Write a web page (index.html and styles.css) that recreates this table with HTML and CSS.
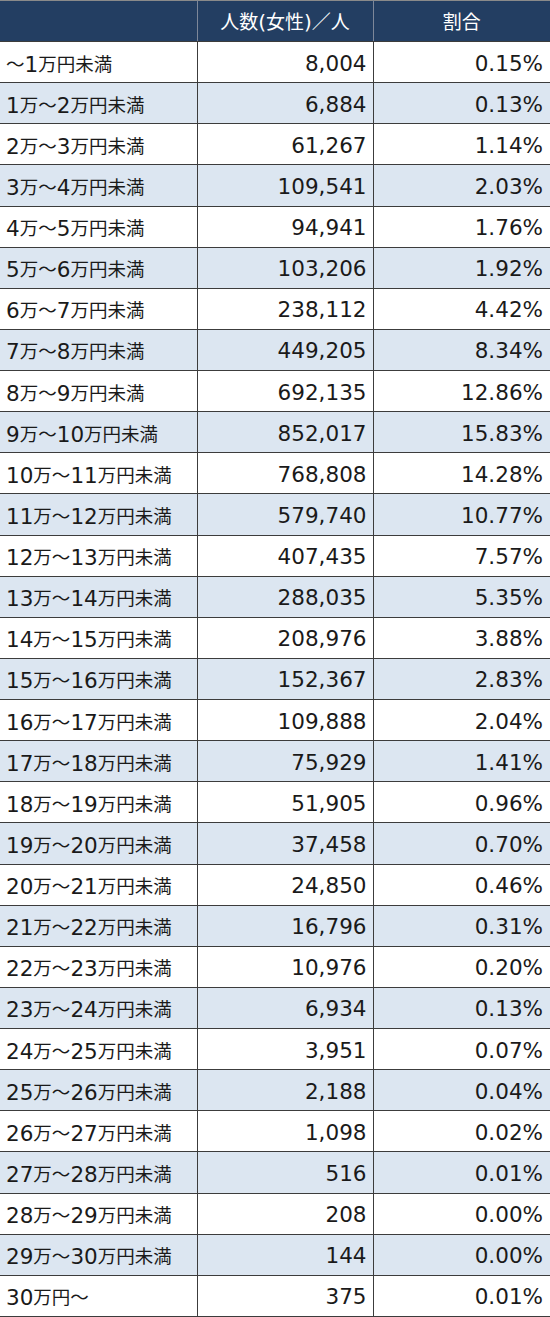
FILE: index.html
```html
<!DOCTYPE html>
<html lang="ja">
<head>
<meta charset="utf-8">
<link rel="stylesheet" href="styles.css">
</head>
<body>
<table class="dist">
<colgroup><col class="c1"><col class="c2"><col class="c3"></colgroup>
<thead>
<tr><th></th><th>人数<span class="p">(</span>女性<span class="p">)</span>／人</th><th>割合</th></tr>
</thead>
<tbody>
<tr><td>～<span class="n">1</span>万円未満</td><td>8,004</td><td>0.15%</td></tr>
<tr><td><span class="n">1</span>万～<span class="n">2</span>万円未満</td><td>6,884</td><td>0.13%</td></tr>
<tr><td><span class="n">2</span>万～<span class="n">3</span>万円未満</td><td>61,267</td><td>1.14%</td></tr>
<tr><td><span class="n">3</span>万～<span class="n">4</span>万円未満</td><td>109,541</td><td>2.03%</td></tr>
<tr><td><span class="n">4</span>万～<span class="n">5</span>万円未満</td><td>94,941</td><td>1.76%</td></tr>
<tr><td><span class="n">5</span>万～<span class="n">6</span>万円未満</td><td>103,206</td><td>1.92%</td></tr>
<tr><td><span class="n">6</span>万～<span class="n">7</span>万円未満</td><td>238,112</td><td>4.42%</td></tr>
<tr><td><span class="n">7</span>万～<span class="n">8</span>万円未満</td><td>449,205</td><td>8.34%</td></tr>
<tr><td><span class="n">8</span>万～<span class="n">9</span>万円未満</td><td>692,135</td><td>12.86%</td></tr>
<tr><td><span class="n">9</span>万～<span class="n">10</span>万円未満</td><td>852,017</td><td>15.83%</td></tr>
<tr><td><span class="n">10</span>万～<span class="n">11</span>万円未満</td><td>768,808</td><td>14.28%</td></tr>
<tr><td><span class="n">11</span>万～<span class="n">12</span>万円未満</td><td>579,740</td><td>10.77%</td></tr>
<tr><td><span class="n">12</span>万～<span class="n">13</span>万円未満</td><td>407,435</td><td>7.57%</td></tr>
<tr><td><span class="n">13</span>万～<span class="n">14</span>万円未満</td><td>288,035</td><td>5.35%</td></tr>
<tr><td><span class="n">14</span>万～<span class="n">15</span>万円未満</td><td>208,976</td><td>3.88%</td></tr>
<tr><td><span class="n">15</span>万～<span class="n">16</span>万円未満</td><td>152,367</td><td>2.83%</td></tr>
<tr><td><span class="n">16</span>万～<span class="n">17</span>万円未満</td><td>109,888</td><td>2.04%</td></tr>
<tr><td><span class="n">17</span>万～<span class="n">18</span>万円未満</td><td>75,929</td><td>1.41%</td></tr>
<tr><td><span class="n">18</span>万～<span class="n">19</span>万円未満</td><td>51,905</td><td>0.96%</td></tr>
<tr><td><span class="n">19</span>万～<span class="n">20</span>万円未満</td><td>37,458</td><td>0.70%</td></tr>
<tr><td><span class="n">20</span>万～<span class="n">21</span>万円未満</td><td>24,850</td><td>0.46%</td></tr>
<tr><td><span class="n">21</span>万～<span class="n">22</span>万円未満</td><td>16,796</td><td>0.31%</td></tr>
<tr><td><span class="n">22</span>万～<span class="n">23</span>万円未満</td><td>10,976</td><td>0.20%</td></tr>
<tr><td><span class="n">23</span>万～<span class="n">24</span>万円未満</td><td>6,934</td><td>0.13%</td></tr>
<tr><td><span class="n">24</span>万～<span class="n">25</span>万円未満</td><td>3,951</td><td>0.07%</td></tr>
<tr><td><span class="n">25</span>万～<span class="n">26</span>万円未満</td><td>2,188</td><td>0.04%</td></tr>
<tr><td><span class="n">26</span>万～<span class="n">27</span>万円未満</td><td>1,098</td><td>0.02%</td></tr>
<tr><td><span class="n">27</span>万～<span class="n">28</span>万円未満</td><td>516</td><td>0.01%</td></tr>
<tr><td><span class="n">28</span>万～<span class="n">29</span>万円未満</td><td>208</td><td>0.00%</td></tr>
<tr><td><span class="n">29</span>万～<span class="n">30</span>万円未満</td><td>144</td><td>0.00%</td></tr>
<tr><td><span class="n">30</span>万円～</td><td>375</td><td>0.01%</td></tr>
</tbody>
</table>
</body>
</html>
```
FILE: styles.css
```css
html, body {
  margin: 0;
  padding: 0;
  background: #ffffff;
}
.dist {
  width: 550px;
  height: 1317px;
  border-collapse: collapse;
  table-layout: fixed;
  font-family: "Noto Sans CJK JP", "DejaVu Sans", sans-serif;
  font-size: 18.5px;
  color: #1a1a1a;
}
.c1 { width: 197px; }
.c2 { width: 176px; }
.c3 { width: 177px; }
.dist th,
.dist td {
  border: 1px solid #3c3c3c;
  padding: 0 6px;
  height: 40px;
  white-space: nowrap;
  line-height: 20px;
  vertical-align: middle;
}
.dist tr > :first-child { border-left: none; }
.dist tr > :last-child { border-right: none; }
.dist th {
  background: #233e62;
  color: #ffffff;
  font-weight: normal;
  font-size: 19px;
  text-align: center;
  border-top-color: #8a8a8a;
  border-left-color: #7d8799;
  border-right-color: #7d8799;
}
.dist td {
  text-align: right;
  font-family: "DejaVu Sans", sans-serif;
  font-size: 21.5px;
  padding-top: 3px;
  height: 37px;
}
.dist td:last-child { padding-right: 7px; }
.dist td:first-child {
  text-align: left;
  padding-left: 6px;
  font-family: "Noto Sans CJK JP", sans-serif;
  font-size: 18.5px;
}
.dist .n {
  font-family: "DejaVu Sans", sans-serif;
  font-size: 21.5px;
  line-height: 20px;
  vertical-align: -1px;
}
.dist .p {
  font-family: "DejaVu Sans", sans-serif;
  font-size: 20px;
  line-height: 20px;
}
.dist tbody tr:nth-child(even) td { background: #dce6f1; }
```
